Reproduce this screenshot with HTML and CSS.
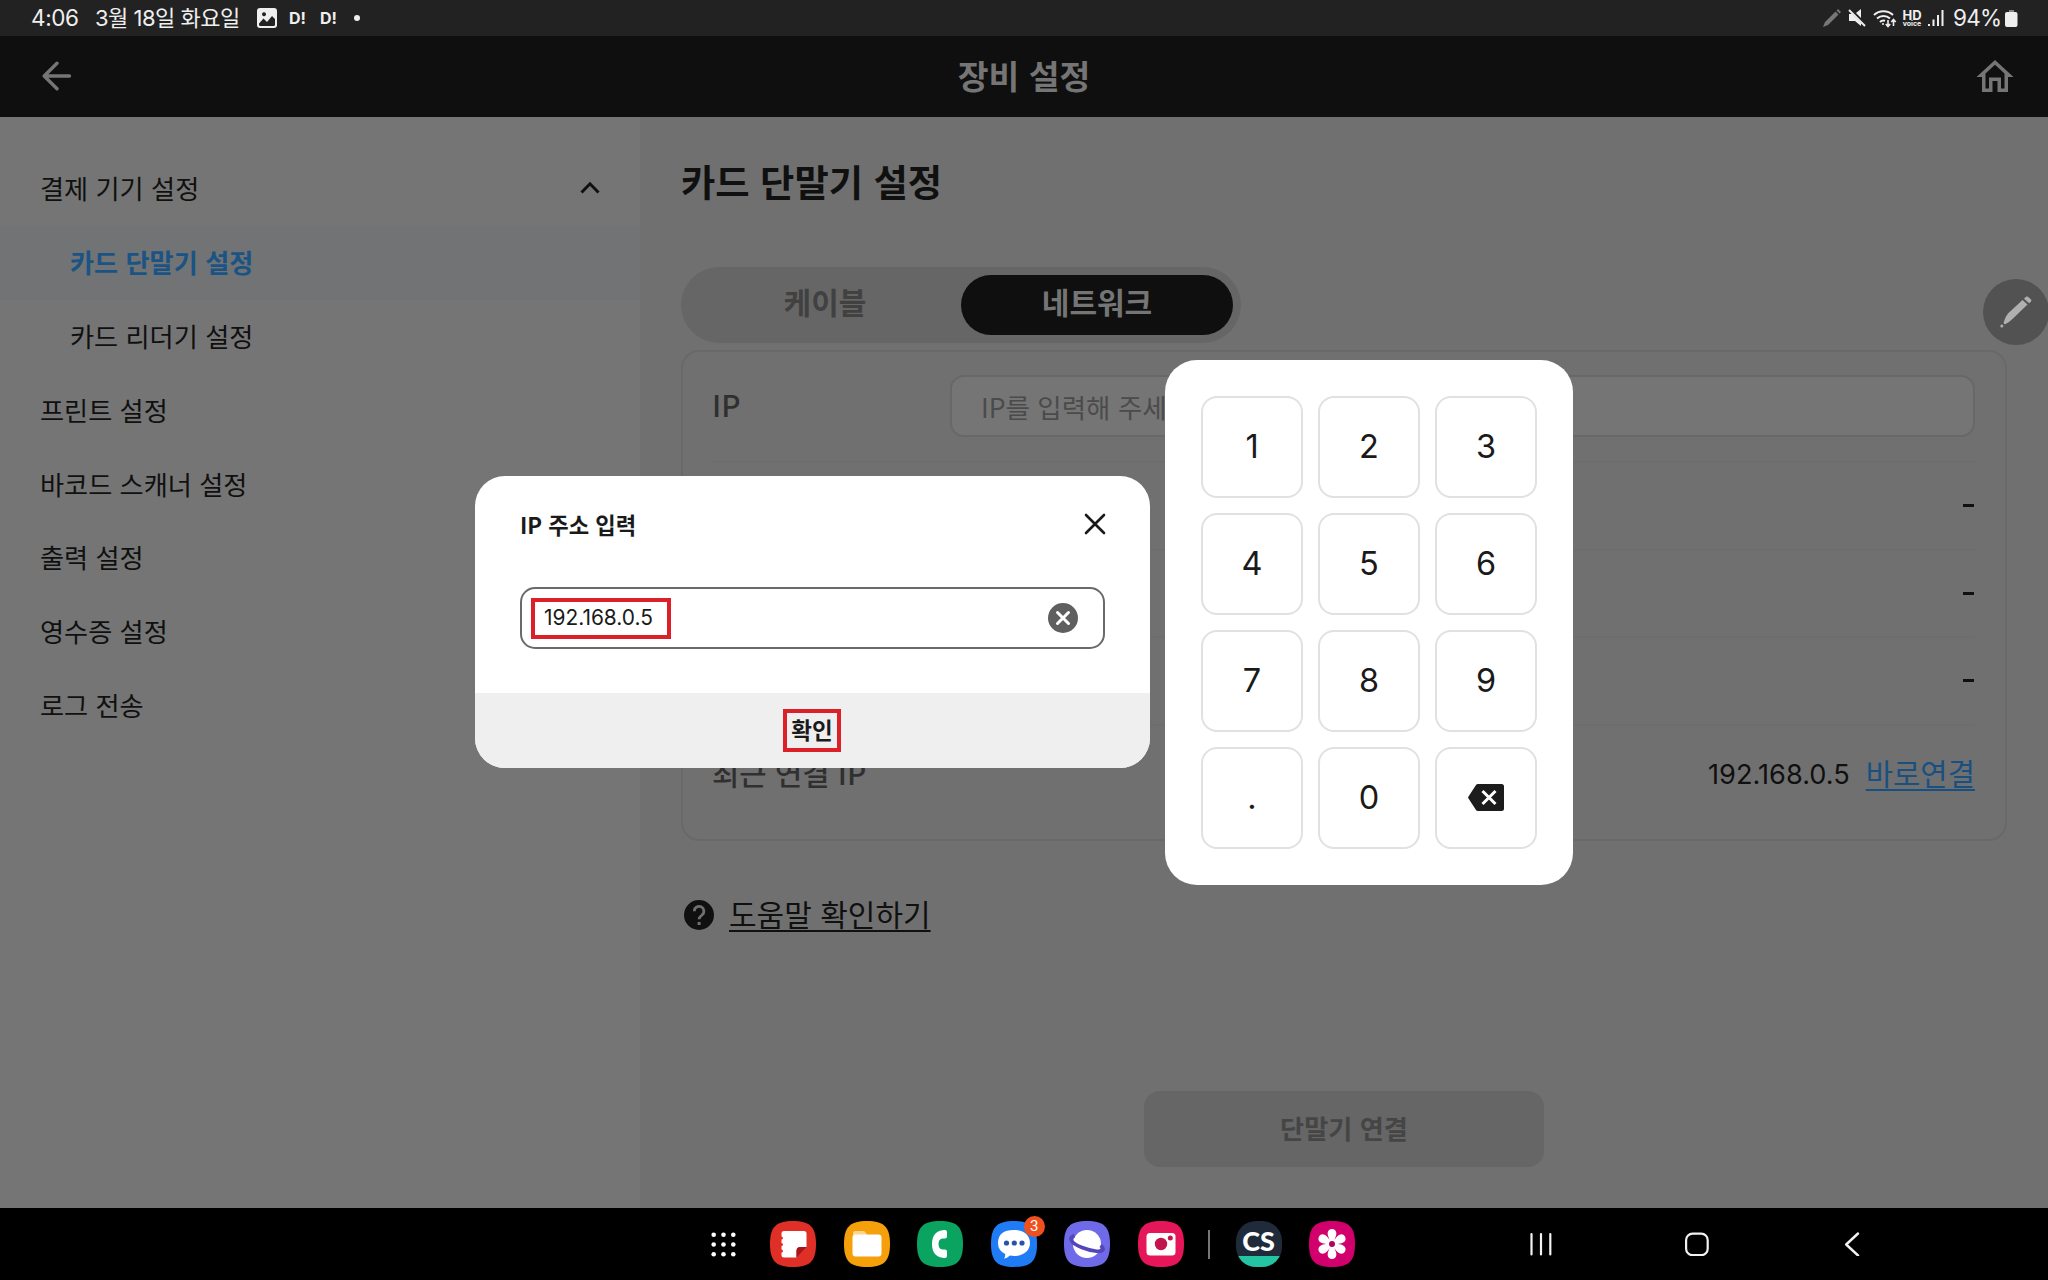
FILE: index.html
```html
<!DOCTYPE html>
<html lang="ko">
<head>
	<meta charset="UTF-8">
	<title>장비 설정</title>
	<link rel="stylesheet" href="styles.css">
</head>
<body>
	<div class="status">
		<span class="time">4:06</span>
		<span class="date">3월 18일 화요일</span>
		<svg class="st-photo" width="20" height="20" viewBox="0 0 20 20"><path fill="#efefef" fill-rule="evenodd" d="M3 0h14a3 3 0 0 1 3 3v14a3 3 0 0 1-3 3H3a3 3 0 0 1-3-3V3a3 3 0 0 1 3-3zM2 15.5l4.500-5 3.500 3.500 5-6 3 3v5.500a1.500 1.500 0 0 1-1.500 1.500h-13A1.500 1.500 0 0 1 2 16.500zM7 4.200a2 2 0 1 0 .01 0z"/></svg>
		<b class="st-app">D!</b>
		<b class="st-app">D!</b>
		<i class="st-dot"></i>
		<div class="st-right">
			<svg width="18" height="18" viewBox="0 0 18 18"><path fill="#777" d="M0 18l2-5L12.500 2.500l3 3L5 16zM13.500 1.500L15 0l3 3-1.500 1.500z"/></svg>
			<svg class="st-mute" width="18" height="18" viewBox="0 0 18 18"><path fill="#efefef" d="M1 5h3l9 9v3l-6-5H1zM8 4l5-4v9z"/><path stroke="#efefef" stroke-width="2" d="M1 1l16 16"/></svg>
			<svg class="st-wifi" width="24" height="19" viewBox="0 0 24 19" fill="none" stroke="#efefef" stroke-width="2"><path d="M1 6a14 14 0 0 1 19 0M4 9.500a9.500 9.500 0 0 1 13 0M7 13a5 5 0 0 1 5-1.300"/><circle cx="10" cy="15" r="1" fill="#efefef" stroke="none"/><path stroke-width="1.600" d="M15 11v6M12.800 15l2.200 2.500 2.200-2.500M20.500 17v-6M18.300 13l2.200-2.500 2.200 2.500"/></svg>
			<span class="st-hd"><b>HD</b><small>voice</small></span>
			<svg class="st-signal" width="16" height="18" viewBox="0 0 16 18" fill="#efefef"><path d="M0 15h2v2H0zM4.500 10.500h2V17h-2zM9 6h2v11H9zM13.500 1h2v16h-2z"/></svg>
			<span class="st-pct">94%</span>
			<svg class="st-batt" width="13" height="17" viewBox="0 0 13 17"><path fill="#888" d="M4 0h5v3H4z"/><rect y="2" width="12.500" height="15" rx="2" fill="#efefef"/></svg>
		</div>
	</div>

	<div class="header">
		<svg width="30" height="30" viewBox="0 0 30 30" fill="none" stroke="#757575" stroke-width="3.400" stroke-linecap="round" stroke-linejoin="round"><path d="M27.500 15H2.500M15 2.200L2.200 15 15 27.800"/></svg>
		<h1>장비 설정</h1>
		<svg width="38" height="34" viewBox="0 0 38 34"><path fill="#757575" fill-rule="evenodd" d="M19 1l18.500 17H32v15H21.500V22h-5v11H6V18H.5zM19 5.700L9.500 14.400V29.500H13V18.500h12v11h3.500V14.400z"/></svg>
	</div>

	<div class="body">
		<ul class="menu">
			<li>결제 기기 설정<svg width="20" height="13" viewBox="0 0 20 13" fill="none" stroke="#101010" stroke-width="3"><path d="M1.500 11.500L10 2.800l8.500 8.700"/></svg></li>
			<li class="sub active">카드 단말기 설정</li>
			<li class="sub">카드 리더기 설정</li>
			<li>프린트 설정</li>
			<li>바코드 스캐너 설정</li>
			<li>출력 설정</li>
			<li>영수증 설정</li>
			<li>로그 전송</li>
		</ul>

		<div class="main">
			<h2>카드 단말기 설정</h2>
			<div class="tabs">
				<span>케이블</span>
				<span class="on">네트워크</span>
			</div>
			<div class="panel">
				<div class="row row-ip">
					<span class="label">IP</span>
					<div class="field">IP를 입력해 주세요.</div>
				</div>
				<div class="row"><span class="dash"></span></div>
				<div class="row"><span class="dash"></span></div>
				<div class="row"><span class="dash"></span></div>
				<div class="row row-last">
					<span class="label">최근 연결 IP</span>
					<span class="ip">192.168.0.5</span>
					<a class="link">바로연결</a>
				</div>
			</div>
			<div class="help">
				<svg width="30" height="30" viewBox="0 0 30 30"><circle cx="15" cy="15" r="15" fill="#101010"/><path d="M10.300 11.300a4.800 4.800 0 1 1 7.800 3.600c-2 1.500-3 2.200-3 4.400" fill="none" stroke="#707070" stroke-width="2.800"/><rect x="13.600" y="22" width="3" height="3" fill="#707070"/></svg>
				<a>도움말 확인하기</a>
			</div>
			<div class="connect">단말기 연결</div>
		</div>
	</div>

	<div class="nav">
		<svg class="apps" width="25" height="25" viewBox="0 0 25 25" fill="#fff"><circle cx="2.700" cy="2.700" r="2.300"/><circle cx="12.500" cy="2.700" r="2.300"/><circle cx="22.300" cy="2.700" r="2.300"/><circle cx="2.700" cy="12.500" r="2.300"/><circle cx="12.500" cy="12.500" r="2.300"/><circle cx="22.300" cy="12.500" r="2.300"/><circle cx="2.700" cy="22.300" r="2.300"/><circle cx="12.500" cy="22.300" r="2.300"/><circle cx="22.300" cy="22.300" r="2.300"/></svg>
		<div class="dock">
			<!-- notes -->
			<svg width="46" height="46" viewBox="0 0 46 46"><path fill="#e02f27" d="M23 0C40 0 46 6 46 23S40 46 23 46 0 40 0 23 6 0 23 0z"/><path fill="#fff" d="M14 10h20a2.500 2.500 0 0 1 2.500 2.500V26h-6q-4 0-4 4v6.500H14a2.500 2.500 0 0 1-2.500-2.500v-2.500a1.500 1.500 0 0 0 0-3V25a1.500 1.500 0 0 0 0-3v-3.500a1.500 1.500 0 0 0 0-3v-3A2.500 2.500 0 0 1 14 10z"/><path fill="#a81518" d="M26.500 36.500V30q0-4 4-4h6z"/></svg>
			<!-- files -->
			<svg width="46" height="46" viewBox="0 0 46 46"><path fill="#f59f0a" d="M23 0C40 0 46 6 46 23S40 46 23 46 0 40 0 23 6 0 23 0z"/><path fill="#fbd58e" d="M11 10h8q2 0 3 2l1 2h-14v-2q0-2 2-2z"/><rect x="8.500" y="13.500" width="29" height="22" rx="3" fill="#fff"/></svg>
			<!-- phone -->
			<svg width="46" height="46" viewBox="0 0 46 46"><path fill="#0ba360" d="M23 0C40 0 46 6 46 23S40 46 23 46 0 40 0 23 6 0 23 0z"/><path fill="#fff" d="M27 9h1a2 2 0 0 1 2 2v4.500a2 2 0 0 1-2 2h-2.500q-4 .5-4 5.500t4 5.500H28a2 2 0 0 1 2 2V35a2 2 0 0 1-2 2h-1q-12-1-12-14T27 9z"/></svg>
			<!-- messages -->
			<div class="msg">
				<svg width="46" height="46" viewBox="0 0 46 46"><path fill="#1f7cf5" d="M23 0C40 0 46 6 46 23S40 46 23 46 0 40 0 23 6 0 23 0z"/><path fill="#fff" d="M23 9c10 0 16 5.500 16 13s-6 13-16 13q-2 0-4-.4Q16 37.500 13 37.500q1.500-2 1.200-4.500Q7 29.500 7 22 7 9 23 9z"/><g fill="#2754a8"><circle cx="15.500" cy="22" r="2.600"/><circle cx="23.300" cy="22" r="2.600"/><circle cx="31" cy="22" r="2.600"/></g></svg>
				<span class="badge">3</span>
			</div>
			<!-- internet -->
			<svg width="46" height="46" viewBox="0 0 46 46"><path fill="#6f6ae8" d="M23 0C40 0 46 6 46 23S40 46 23 46 0 40 0 23 6 0 23 0z"/><circle cx="23" cy="23" r="14" fill="#fff"/><path fill="none" stroke="#5446b8" stroke-width="3.600" d="M10.500 14.500C3 17 8 22.500 18 26.500s22 5.500 21 1c-.3-1-1.300-2.200-2.500-3"/></svg>
			<!-- camera -->
			<svg width="46" height="46" viewBox="0 0 46 46"><path fill="#e5165a" d="M23 0C40 0 46 6 46 23S40 46 23 46 0 40 0 23 6 0 23 0z"/><rect x="8.500" y="12" width="29" height="22.500" rx="3.500" fill="#fff"/><circle cx="23" cy="23" r="6.200" fill="#c2154e"/><circle cx="32.300" cy="17" r="2.500" fill="#c2154e"/></svg>
			<i class="split"></i>
			<!-- scanner -->
			<div class="cs"><b>CS</b></div>
			<!-- gallery -->
			<svg width="46" height="46" viewBox="0 0 46 46"><path fill="#d1006c" d="M23 0C40 0 46 6 46 23S40 46 23 46 0 40 0 23 6 0 23 0z"/><g fill="#fff"><path id="petal" d="M23 8c2.600 0 4.400 1.900 4.400 4.500 0 3-2 5-2.200 8.500h-4.400c-.2-3.500-2.200-5.500-2.200-8.500C18.600 9.900 20.400 8 23 8z"/><use href="#petal" transform="rotate(60 23 23)"/><use href="#petal" transform="rotate(120 23 23)"/><use href="#petal" transform="rotate(180 23 23)"/><use href="#petal" transform="rotate(240 23 23)"/><use href="#petal" transform="rotate(300 23 23)"/><circle cx="23" cy="23" r="4.500"/></g><circle cx="23" cy="23" r="3" fill="#b5005c"/></svg>
		</div>
		<div class="keys">
			<svg width="24" height="24" viewBox="0 0 24 24" stroke="#f2f2f2" stroke-width="2.200" stroke-linecap="round"><path d="M2.500 2v20.500M12 2v20.500M21.300 2v20.500"/></svg>
			<svg width="24" height="24" viewBox="0 0 24 24" fill="none" stroke="#f2f2f2" stroke-width="2.200"><rect x="1.100" y="1.600" width="21.600" height="21.600" rx="6.500"/></svg>
			<svg width="24" height="24" viewBox="0 0 24 24" fill="none" stroke="#f2f2f2" stroke-width="2.400" stroke-linecap="round" stroke-linejoin="round"><path d="M18 1.500L6.200 12.500l11.800 11"/></svg>
		</div>
	</div>

	<div class="pen">
		<svg width="32" height="32" viewBox="0 0 32 32" fill="#b0b0b0"><path d="M4 25.500Q5 21 8 17.500L22.500 4l5 4.500L13 22.500Q9 26.500 5 28.300q-2-.5-1-2.800z"/><path d="M24 2.700L26 .8q1-.8 2 0l3 2.700q.8.900 0 2l-1.800 1.800z"/><circle cx="1.800" cy="30" r="1.500"/></svg>
	</div>

	<!-- IP popup -->
	<div class="popup">
		<div class="popup-top">
			<h3>IP 주소 입력</h3>
			<svg width="22" height="22" viewBox="0 0 22 22" stroke="#1a1a1a" stroke-width="2.600" stroke-linecap="round"><path d="M2 2l18 18M20 2L2 20"/></svg>
		</div>
		<div class="popup-input">
			<span class="mark mark-ip">192.168.0.5</span>
			<svg width="30" height="30" viewBox="0 0 30 30"><circle cx="15" cy="15" r="15" fill="#5f5f5f"/><path stroke="#fff" stroke-width="3" stroke-linecap="round" d="M9.500 9.500l11 11M20.500 9.500l-11 11"/></svg>
		</div>
		<div class="popup-ok"><span class="mark mark-ok">확인</span></div>
	</div>

	<!-- number keypad -->
	<div class="keypad">
		<span>1</span><span>2</span><span>3</span>
		<span>4</span><span>5</span><span>6</span>
		<span>7</span><span>8</span><span>9</span>
		<span>.</span><span>0</span>
		<span><svg width="36" height="27" viewBox="0 0 36 27"><path fill="#1c1c1c" d="M10 0h23.500A2.500 2.500 0 0 1 36 2.500v22a2.500 2.500 0 0 1-2.500 2.500H10q-1.300 0-2-1L.5 14.500q-.7-1 0-2L8 1q.7-1 2-1z"/><path stroke="#fff" stroke-width="3" d="M14.500 7l13 13M27.500 7l-13 13"/></svg></span>
	</div>
</body>
</html>
```

FILE: styles.css
```css
* {
	box-sizing: border-box;
}
body,h1,h2,h3,ul {
	margin: 0;
	padding: 0;
}
body {
	position: relative;
	width: 2048px;
	height: 1280px;
	overflow: hidden;
	background: #707070;
	font-family: "Noto Sans CJK KR", sans-serif;
	color: #101010;
	display: flex;
	flex-direction: column;
}
svg {
	display: block;
	flex: none;
}
span,a,b {
	white-space: nowrap;
}

/* status bar */
.status {
	height: 36px;
	flex: none;
	padding: 0 30px 0 31px;
	background: #222;
	color: #efefef;
	display: flex;
	align-items: center;
	font: 22px/36px Inter, "Noto Sans CJK KR", sans-serif;
}
.time {
	width: 64px;
	font-size: 22.5px;
	letter-spacing: -0.4px;
}
.date {
	width: 162px;
	letter-spacing: -0.5px;
}
.st-app {
	margin-left: 13px;
	width: 18px;
	font-size: 16px;
}
.st-photo + .st-app {
	margin-left: 12px;
}
.st-dot {
	width: 6px;
	height: 6px;
	margin-left: 16px;
	border-radius: 50%;
	background: #efefef;
}
.st-right {
	margin-left: auto;
	display: flex;
	align-items: center;
}
.st-mute {
	margin-left: 7px;
}
.st-wifi {
	margin-left: 7px;
}
.st-hd {
	width: 20px;
	margin-left: 5px;
	display: flex;
	flex-direction: column;
	align-items: center;
}
.st-hd b {
	font-size: 13px;
	line-height: 10px;
}
.st-hd small {
	font-size: 7px;
	font-weight: bold;
	line-height: 7px;
}
.st-signal {
	margin-left: 6px;
}
.st-pct {
	margin-left: 9px;
	width: 48px;
	font-size: 22.5px;
	letter-spacing: -0.7px;
}
.st-batt {
	margin-left: 4px;
}

/* title bar */
.header {
	height: 81px;
	flex: none;
	padding: 0 34px 1px 42px;
	background: #0f0f0f;
	color: #757575;
	display: flex;
	align-items: center;
	justify-content: space-between;
}
h1 {
	font-size: 33.5px;
	line-height: 60px;
	padding-bottom: 2px;
}

.body {
	flex: 1;
	display: flex;
}

/* left menu */
.menu {
	width: 640px;
	flex: none;
	padding-top: 35px;
	background: #757575;
	list-style: none;
	font-size: 26.2px;
}
.menu li {
	height: 73.9px;
	padding: 0 40px 2px;
	line-height: 72px;
	display: flex;
	align-items: center;
	justify-content: space-between;
}
.menu .sub {
	padding-left: 70px;
}
.menu .active {
	background: #717375;
	color: #1a5384;
	font-weight: bold;
}

.main {
	flex: 1;
	padding: 34px 0 0 41px;
	display: flex;
	flex-direction: column;
	align-items: flex-start;
}
h2 {
	font-size: 37.3px;
	line-height: 60px;
}
.tabs {
	width: 560px;
	height: 76px;
	margin-top: 56px;
	padding: 8px;
	border-radius: 38px;
	background: #666;
	display: flex;
	font-size: 30px;
	font-weight: bold;
	line-height: 53px;
	text-align: center;
	color: #414141;
}
.tabs span {
	flex: 1;
}
.tabs .on {
	border-radius: 30px;
	background: #0f0f0f;
	color: #757575;
}
.panel {
	width: 1326px;
	height: 491px;
	margin-top: 7px;
	padding: 0 30px 0 29px;
	border: 2px solid #696969;
	border-radius: 18px;
}
.row {
	height: 87.5px;
	border-bottom: 2px solid #6d6d6d;
	display: flex;
	align-items: center;
	justify-content: flex-end;
	font-size: 29.7px;
}
.row-ip {
	height: 111px;
	padding-bottom: 1px;
}
.row-ip .label {
	padding-bottom: 4px;
}
.row-last {
	height: 94px;
	border: 0;
}
.label {
	margin-right: auto;
	font-weight: 500;
	color: #303030;
}
.field {
	width: 1025px;
	height: 62px;
	padding-left: 29px;
	border: 2px solid #686868;
	border-radius: 14px;
	background: #757575;
	color: #4b4b4b;
	font-size: 26.5px;
	line-height: 59px;
}
.dash {
	width: 11px;
	height: 3px;
	margin-right: 1px;
	background: #101010;
}
.ip {
	margin-right: 16px;
	padding-top: 4px;
	font: 27.2px Inter, sans-serif;
}
.link {
	color: #1a5080;
	text-decoration: underline;
	text-decoration-thickness: 2px;
	text-underline-offset: 4px;
}
.help {
	height: 60px;
	margin: 44px 0 0 3px;
	display: flex;
	align-items: center;
	font-size: 30px;
}
.help a {
	margin-left: 15px;
	padding-bottom: 4px;
	text-decoration: underline;
	text-decoration-thickness: 2px;
	text-underline-offset: 4px;
}
.connect {
	width: 400px;
	height: 76px;
	margin: 146px 0 0 463px;
	border-radius: 16px;
	background: #666;
	color: #454545;
	font-size: 26.2px;
	font-weight: bold;
	line-height: 74px;
	text-align: center;
}

/* bottom bar */
.nav {
	height: 72px;
	flex: none;
	padding: 0 184px 0 711px;
	background: #000;
	display: flex;
	align-items: center;
}
.dock {
	margin-left: 34px;
	display: flex;
	align-items: center;
	gap: 27.6px;
}
.msg {
	position: relative;
}
.badge {
	position: absolute;
	top: -5px;
	right: -8px;
	width: 21px;
	height: 21px;
	border-radius: 50%;
	background: #f0501e;
	color: #fff;
	font: 15px/21px Roboto, sans-serif;
	text-align: center;
}
.split {
	width: 2px;
	height: 29px;
	margin: 0 -1.5px -1px -4px;
	background: #777;
}
.cs {
	width: 46px;
	height: 46px;
	border-radius: 20px;
	background: linear-gradient(#1f2b3a 77%, #24c3a1 77%);
	color: #fff;
	font: bold 27px/40px Lato, sans-serif;
	text-align: center;
}
.keys {
	margin-left: auto;
	display: flex;
	gap: 131.5px;
}

/* floating pen button */
.pen {
	position: absolute;
	left: 1983px;
	top: 279px;
	width: 66px;
	height: 66px;
	border-radius: 50%;
	background: #525252;
	display: flex;
	align-items: center;
	justify-content: center;
}

/* popup */
.popup {
	position: absolute;
	left: 475px;
	top: 476px;
	width: 675px;
	height: 292px;
	border-radius: 30px;
	background: #fff;
	color: #1a1a1a;
	overflow: hidden;
	display: flex;
	flex-direction: column;
}
.popup-top {
	height: 111px;
	padding: 0 44px 15px 45px;
	display: flex;
	align-items: center;
	justify-content: space-between;
}
h3 {
	font-size: 22.2px;
	line-height: 40px;
}
.popup-input {
	width: 585px;
	height: 62px;
	margin: 0 45px;
	padding: 0 25px 0 9px;
	border: 2px solid #6a6a6a;
	border-radius: 15px;
	display: flex;
	align-items: center;
	justify-content: space-between;
}
.mark {
	border: 4px solid #dc202a;
}
.mark-ip {
	width: 140px;
	height: 41px;
	padding-left: 9px;
	font: 20.9px/31px Inter, sans-serif;
}
.popup-ok {
	height: 75px;
	margin-top: auto;
	padding-right: 1px;
	background: #efefef;
	display: flex;
	align-items: center;
	justify-content: center;
}
.mark-ok {
	width: 58px;
	height: 43px;
	font-size: 22.5px;
	font-weight: bold;
	line-height: 33px;
	text-align: center;
}

/* keypad */
.keypad {
	position: absolute;
	left: 1165px;
	top: 359.5px;
	width: 408px;
	height: 525px;
	padding: 36px;
	border-radius: 32px;
	background: #fff;
	display: grid;
	grid-template-columns: repeat(3, 102px);
	grid-template-rows: repeat(4, 102px);
	gap: 15px;
}
.keypad span {
	border: 2px solid #e1e1e1;
	border-radius: 16px;
	display: flex;
	align-items: center;
	justify-content: center;
	color: #1a1a1a;
	font: 32.5px Inter, sans-serif;
}
```
